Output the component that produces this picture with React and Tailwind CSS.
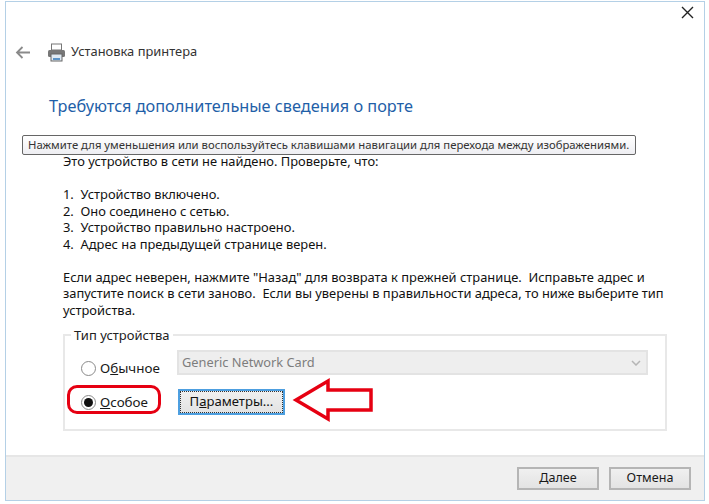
function Radio({ checked }) {
  return (
    <span className="w-[15px] h-[15px] rounded-full border border-[#8a8a8a] bg-white flex items-center justify-center shrink-0">
      {checked && <span className="w-[9px] h-[9px] rounded-full bg-[#111]" />}
    </span>
  );
}
export default function App() {
  return (
    <div className="w-[709px] h-[504px] bg-white overflow-hidden pt-px pl-[5px] font-['Noto_Sans','Open_Sans',sans-serif] text-[12px] text-[#1a1a1a]">
      <div className="relative w-[700px] h-[500px] border border-[#b4d0e6] bg-white flex flex-col">
        <div className="flex justify-end pt-[4px] pr-[10px] h-[37px] shrink-0">
          <svg width="13" height="13" viewBox="0 0 13 13" fill="none" stroke="#222" strokeWidth="1.4"><path d="M1 1L12 12M12 1L1 12" /></svg>
        </div>
        <div className="flex items-center h-[26px] pl-[9px] shrink-0">
          <svg width="15" height="13" viewBox="0 0 15 13" fill="none" stroke="#8a8a8a" strokeWidth="1.8"><path d="M15 6.5H2M7.5 1L2 6.5L7.5 12" /></svg>
          <svg className="ml-[17px]" width="19" height="19" viewBox="0 0 19 19">
            <rect x="4.5" y="1" width="10" height="6" fill="#fff" stroke="#777" />
            <rect x="1" y="7" width="17" height="7" rx="1.5" fill="#777" />
            <rect x="4" y="11" width="11" height="7" fill="#dfe9f2" stroke="#666" />
            <rect x="6" y="15" width="7" height="2" fill="#5b93c7" />
          </svg>
          <span className="ml-[5px] text-[12.9px] text-[#333]">Установка принтера</span>
        </div>
        <h1 className="ml-[43px] mt-[30px] text-[16.3px] leading-[22px] text-[#1f5fa8] font-normal whitespace-nowrap shrink-0">Требуются дополнительные сведения о порте</h1>
        <div className="absolute left-[16px] top-[133px] h-[20px] w-[614px] rounded-[2px] bg-linear-to-b from-white to-[#eeeef2] border border-[#666] flex items-center px-[5px] text-[11.32px] text-[#333] whitespace-nowrap z-10">Нажмите для уменьшения или воспользуйтесь клавишами навигации для перехода между изображениями.</div>
        <div className="ml-[57px] mt-[36px] text-[12.9px] leading-[16.5px] text-[#111] whitespace-nowrap shrink-0">
          <p>Это устройство в сети не найдено. Проверьте, что:</p>
          <p className="mt-[16.5px]">1.&nbsp; Устройство включено.</p>
          <p>2.&nbsp; Оно соединено с сетью.</p>
          <p>3.&nbsp; Устройство правильно настроено.</p>
          <p>4.&nbsp; Адрес на предыдущей странице верен.</p>
          <p className="mt-[16.5px]">Если адрес неверен, нажмите "Назад" для возврата к прежней странице.&nbsp; Исправьте адрес и</p>
          <p>запустите поиск в сети заново.&nbsp; Если вы уверены в правильности адреса, то ниже выберите тип</p>
          <p>устройства.</p>
        </div>
        <fieldset className="ml-[57px] mt-[10px] w-[604px] h-[103px] border-2 border-[#e8e8e8] px-[16px] shrink-0">
          <legend className="ml-[-10px] px-[3px] text-[13px] leading-[14px] text-[#222]">Тип устройства</legend>
          <div className="flex items-start mt-[8px]">
            <div className="flex items-center gap-[4px] w-[96px] mt-[9px]"><Radio /><span className="text-[13.4px] leading-[18px]">О<u>б</u>ычное</span></div>
            <div className="w-[471px] h-[25px] bg-[#eeeeee] border-2 border-[#e3e3e3] flex items-center justify-between pl-[3px] pr-[5px] text-[12.8px] text-[#7d7d7d]">
              <span>Generic Network Card</span>
              <svg width="10" height="6" viewBox="0 0 10 6" fill="none" stroke="#b5b5b5" strokeWidth="1.5"><path d="M1 1L5 5L9 1" /></svg>
            </div>
          </div>
          <div className="flex items-center mt-[12px]">
            <div className="flex items-center gap-[4px] w-[97px]"><Radio checked /><span className="text-[13.4px] leading-[18px]"><u>О</u>собое</span></div>
            <button className="w-[107px] h-[26px] border-2 border-[#4d9fe0] bg-linear-to-b from-[#f0f0f0] to-[#e3e3e3] outline-1 outline-dotted outline-[#333] outline-offset-[-3px] text-[13.1px] text-[#111]">П<u>а</u>раметры...</button>
          </div>
        </fieldset>
        <div className="mt-auto h-[45px] bg-[#f0f0f0] border-t-2 border-[#e6e6e6] flex items-center justify-end gap-[10px] pr-[13px]">
          <button className="w-[82px] h-[23px] bg-linear-to-b from-[#f0f0f0] to-[#e3e3e3] border-2 border-[#b5b5b5] text-[12.6px]"><u>Д</u>алее</button>
          <button className="w-[82px] h-[23px] bg-linear-to-b from-[#f0f0f0] to-[#e3e3e3] border-2 border-[#b5b5b5] text-[12.6px]">Отмена</button>
        </div>
        <div className="absolute left-[61px] top-[383px] w-[94px] h-[29px] border-[3.5px] border-[#e60012] rounded-[10px]" />
        <svg className="absolute left-[285px] top-[375px]" width="90" height="46" viewBox="0 0 90 46" fill="none" stroke="#e60012" strokeWidth="3.5"><path d="M5 23L37 4V13H80V33H37V42Z" /></svg>
      </div>
    </div>
  );
}
